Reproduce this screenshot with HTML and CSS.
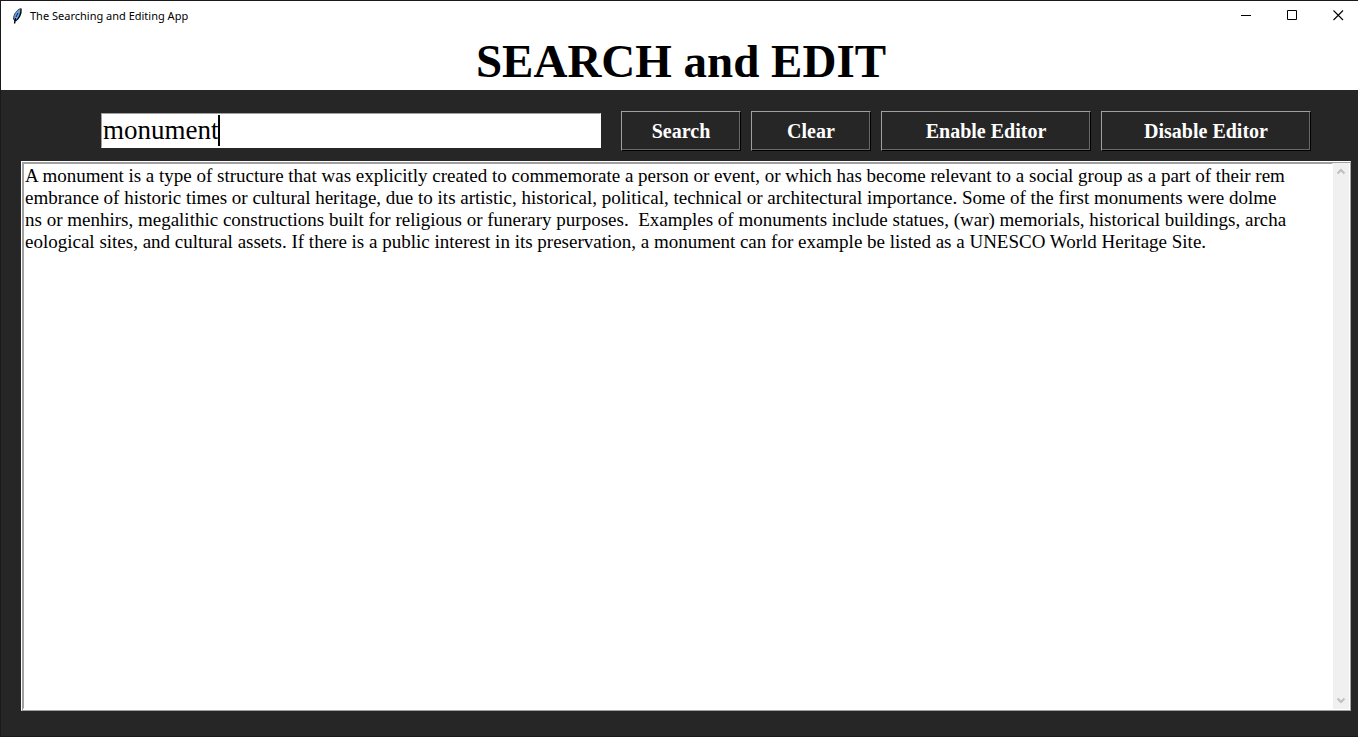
FILE: index.html
```html
<!DOCTYPE html>
<html lang="en">
<head>
<meta charset="utf-8">
<title>The Searching and Editing App</title>
<link rel="stylesheet" href="styles.css">
</head>
<body>
<div class="window">
  <header class="titlebar">
    <svg class="feather" width="12" height="18" viewBox="0 0 12 18" aria-hidden="true">
      <path d="M9.500 1.500C6 3 2.500 7 2.500 12L4.500 14C8 12 10 7 9.500 1.500Z" fill="#5ea2ee"/>
      <path d="M10 1.500C10.500 7 8 12 4.500 14" fill="none" stroke="#000" stroke-width="1.400"/>
      <path d="M9.500 1.500C6 3 2.500 7 2.500 12L4 14" fill="none" stroke="#444" stroke-width="1"/>
      <path d="M7 6L5 10" fill="none" stroke="#123" stroke-width="1"/>
      <path d="M4.500 11L3.500 16.500" fill="none" stroke="#000" stroke-width="1.400"/>
    </svg>
    <span class="caption">The Searching and Editing App</span>
    <div class="controls">
      <button class="control" aria-label="Minimize"><svg width="11" height="11" viewBox="0 0 11 11"><path d="M0 5.500H10" stroke="#000"/></svg></button>
      <button class="control" aria-label="Maximize"><svg width="11" height="11" viewBox="0 0 11 11"><path d="M.5 .5H9.500V9.500H.5Z" fill="none" stroke="#000"/></svg></button>
      <button class="control" aria-label="Close"><svg width="11" height="11" viewBox="0 0 11 11"><path d="M.5 .5L10 10M10 .5L.5 10" stroke="#000" stroke-width="1.100"/></svg></button>
    </div>
  </header>
  <h1 class="heading">SEARCH and EDIT</h1>
  <main class="workspace">
    <form class="toolbar" onsubmit="return false">
      <div class="query">
        <input class="query-input" type="text" value="monument" aria-label="Search term">
        <span class="caret"></span>
      </div>
      <div class="actions">
        <button class="action" type="submit">Search</button>
        <button class="action" type="button">Clear</button>
        <button class="action action-wide" type="button">Enable Editor</button>
        <button class="action action-wide" type="button">Disable Editor</button>
      </div>
    </form>
    <div class="editor">
      <textarea class="editor-text" aria-label="Article text" spellcheck="false">A monument is a type of structure that was explicitly created to commemorate a person or event, or which has become relevant to a social group as a part of their rem
embrance of historic times or cultural heritage, due to its artistic, historical, political, technical or architectural importance. Some of the first monuments were dolme
ns or menhirs, megalithic constructions built for religious or funerary purposes.  Examples of monuments include statues, (war) memorials, historical buildings, archa
eological sites, and cultural assets. If there is a public interest in its preservation, a monument can for example be listed as a UNESCO World Heritage Site.</textarea>
      <div class="scrollbar">
        <button class="arrow" type="button" aria-label="Scroll up"><svg width="9" height="7" viewBox="0 0 9 7"><path d="M.5 5.500L4 2L7.500 5.500" fill="none" stroke="#bfbfbf" stroke-width="2"/></svg></button>
        <button class="arrow" type="button" aria-label="Scroll down"><svg width="9" height="7" viewBox="0 0 9 7"><path d="M.5 1.500L4 5L7.500 1.500" fill="none" stroke="#bfbfbf" stroke-width="2"/></svg></button>
      </div>
    </div>
  </main>
</div>
</body>
</html>
```
FILE: styles.css
```css
* {
  box-sizing: border-box;
}

body {
  margin: 0;
  font-family: "Liberation Serif", "Times New Roman", serif;
  color: #000;
}

.window {
  display: flex;
  flex-direction: column;
  height: 100vh;
  overflow: hidden;
  border: 1px solid #1b191b;
  border-right: 0;
  background: #fff;
}

.titlebar {
  display: flex;
  align-items: center;
  height: 29px;
  padding-left: 10px;
  font-family: "Noto Sans", "Open Sans", sans-serif;
  font-size: 11px;
}

.caption {
  margin-left: 7px;
}

.controls {
  display: flex;
  align-self: stretch;
  margin-right: -3px;
  margin-left: auto;
}

.control {
  display: flex;
  align-items: center;
  justify-content: center;
  width: 46px;
  padding: 0;
  border: 0;
  background: transparent;
}

.heading {
  margin: 0;
  height: 60px;
  padding-left: 3px;
  font-size: 47px;
  line-height: 62px;
  text-align: center;
}

.workspace {
  display: flex;
  flex: 1;
  flex-direction: column;
  gap: 10px;
  min-height: 0;
  padding: 21px 7px 25px 20px;
  background: #262626;
}

.toolbar {
  display: flex;
  align-items: flex-start;
  gap: 20px;
  padding: 0 40px 0 80px;
}

.query {
  position: relative;
  flex: 1;
  margin-top: 2px;
}

.query-input {
  display: block;
  width: 100%;
  height: 35px;
  padding: 0 1px;
  border: 1px solid #fff;
  border-top-color: #a0a0a0;
  border-left-color: #a0a0a0;
  border-radius: 0;
  outline: 0;
  background: #fff;
  font-family: inherit;
  font-size: 27px;
  color: #000;
}

.caret {
  position: absolute;
  top: 2px;
  left: 117px;
  width: 2px;
  height: 31px;
  background: #000;
}

.actions {
  display: flex;
  gap: 10px;
}

.action {
  width: 120px;
  height: 40px;
  padding: 0;
  border: 1px solid #000;
  border-top-color: #a0a0a0;
  border-left-color: #a0a0a0;
  box-shadow: inset -1px -1px #696969;
  background: #262626;
  font-family: inherit;
  font-size: 20px;
  font-weight: bold;
  color: #fff;
}

.action-wide {
  width: 210px;
}

.editor {
  display: flex;
  flex: 1;
  min-height: 0;
  border: 1px solid #a0a0a0;
  border-top-color: #fff;
  border-left-color: #fff;
  box-shadow: inset 1px 1px #a0a0a0;
  padding: 1px;
  background: #fff;
}

.editor-text {
  flex: 1;
  padding: 1px;
  border: 1px solid #fff;
  border-top-color: #a0a0a0;
  border-left-color: #a0a0a0;
  outline: 0;
  resize: none;
  overflow: hidden;
  font-family: inherit;
  font-size: 19px;
  line-height: 22px;
  word-break: break-all;
  color: #000;
}

.scrollbar {
  display: flex;
  flex-direction: column;
  justify-content: space-between;
  width: 16px;
  background: #f0f0f0;
}

.arrow {
  display: flex;
  align-items: center;
  justify-content: center;
  height: 17px;
  padding: 0;
  border: 0;
  background: transparent;
}
```
